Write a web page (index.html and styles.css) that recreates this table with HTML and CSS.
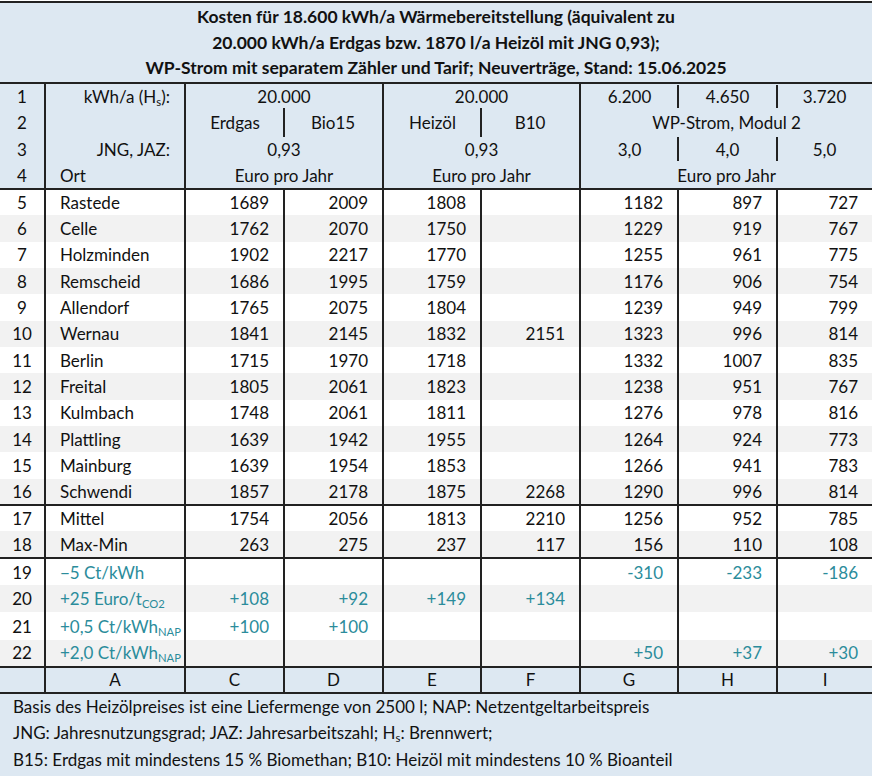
FILE: index.html
```html
<!DOCTYPE html>
<html lang="de">
<head>
<meta charset="utf-8">
<title>Kosten Wärmebereitstellung</title>
<link rel="stylesheet" href="styles.css">
</head>
<body>
<div class="sheet">
  <div class="title">
    <div>Kosten für 18.600 kWh/a Wärmebereitstellung (äquivalent zu</div>
    <div>20.000 kWh/a Erdgas bzw. 1870 l/a Heizöl mit JNG 0,93);</div>
    <div>WP-Strom mit separatem Zähler und Tarif; Neuverträge, Stand: 15.06.2025</div>
  </div>
  <table class="grid">
    <colgroup>
      <col class="c-n"><col class="c-a"><col class="c-c"><col class="c-d"><col class="c-e"><col class="c-f"><col class="c-g"><col class="c-h"><col class="c-i">
    </colgroup>
    <tbody class="head">
      <tr>
        <td class="n">1</td><td class="r">kWh/a (H<sub>s</sub>):</td>
        <td colspan="2" class="c">20.000</td>
        <td colspan="2" class="c sep">20.000</td>
        <td class="c sep tick">6.200</td><td class="c tick">4.650</td><td class="c">3.720</td>
      </tr>
      <tr>
        <td class="n">2</td><td></td>
        <td class="c tick2">Erdgas</td><td class="c">Bio15</td>
        <td class="c sep tick2">Heizöl</td><td class="c">B10</td>
        <td colspan="3" class="c sep">WP-Strom, Modul 2</td>
      </tr>
      <tr>
        <td class="n">3</td><td class="r">JNG, JAZ:</td>
        <td colspan="2" class="c">0,93</td>
        <td colspan="2" class="c sep">0,93</td>
        <td class="c sep tick">3,0</td><td class="c tick">4,0</td><td class="c">5,0</td>
      </tr>
      <tr>
        <td class="n">4</td><td class="l">Ort</td>
        <td colspan="2" class="c">Euro pro Jahr</td>
        <td colspan="2" class="c sep">Euro pro Jahr</td>
        <td colspan="3" class="c sep">Euro pro Jahr</td>
      </tr>
    </tbody>
    <tbody class="data">
      <tr><td class="n">5</td><td class="l">Rastede</td><td>1689</td><td>2009</td><td>1808</td><td></td><td>1182</td><td>897</td><td>727</td></tr>
      <tr><td class="n">6</td><td class="l">Celle</td><td>1762</td><td>2070</td><td>1750</td><td></td><td>1229</td><td>919</td><td>767</td></tr>
      <tr><td class="n">7</td><td class="l">Holzminden</td><td>1902</td><td>2217</td><td>1770</td><td></td><td>1255</td><td>961</td><td>775</td></tr>
      <tr><td class="n">8</td><td class="l">Remscheid</td><td>1686</td><td>1995</td><td>1759</td><td></td><td>1176</td><td>906</td><td>754</td></tr>
      <tr><td class="n">9</td><td class="l">Allendorf</td><td>1765</td><td>2075</td><td>1804</td><td></td><td>1239</td><td>949</td><td>799</td></tr>
      <tr><td class="n">10</td><td class="l">Wernau</td><td>1841</td><td>2145</td><td>1832</td><td>2151</td><td>1323</td><td>996</td><td>814</td></tr>
      <tr><td class="n">11</td><td class="l">Berlin</td><td>1715</td><td>1970</td><td>1718</td><td></td><td>1332</td><td>1007</td><td>835</td></tr>
      <tr><td class="n">12</td><td class="l">Freital</td><td>1805</td><td>2061</td><td>1823</td><td></td><td>1238</td><td>951</td><td>767</td></tr>
      <tr><td class="n">13</td><td class="l">Kulmbach</td><td>1748</td><td>2061</td><td>1811</td><td></td><td>1276</td><td>978</td><td>816</td></tr>
      <tr><td class="n">14</td><td class="l">Plattling</td><td>1639</td><td>1942</td><td>1955</td><td></td><td>1264</td><td>924</td><td>773</td></tr>
      <tr><td class="n">15</td><td class="l">Mainburg</td><td>1639</td><td>1954</td><td>1853</td><td></td><td>1266</td><td>941</td><td>783</td></tr>
      <tr><td class="n">16</td><td class="l">Schwendi</td><td>1857</td><td>2178</td><td>1875</td><td>2268</td><td>1290</td><td>996</td><td>814</td></tr>
    </tbody>
    <tbody class="data stats">
      <tr><td class="n">17</td><td class="l">Mittel</td><td>1754</td><td>2056</td><td>1813</td><td>2210</td><td>1256</td><td>952</td><td>785</td></tr>
      <tr><td class="n">18</td><td class="l">Max-Min</td><td>263</td><td>275</td><td>237</td><td>117</td><td>156</td><td>110</td><td>108</td></tr>
    </tbody>
    <tbody class="data extra">
      <tr><td class="n">19</td><td class="l t">−5 Ct/kWh</td><td></td><td></td><td></td><td></td><td class="t">-310</td><td class="t">-233</td><td class="t">-186</td></tr>
      <tr><td class="n">20</td><td class="l t">+25 Euro/t<sub>CO2</sub></td><td class="t">+108</td><td class="t">+92</td><td class="t">+149</td><td class="t">+134</td><td></td><td></td><td></td></tr>
      <tr><td class="n">21</td><td class="l t">+0,5 Ct/kWh<sub>NAP</sub></td><td class="t">+100</td><td class="t">+100</td><td></td><td></td><td></td><td></td><td></td></tr>
      <tr><td class="n">22</td><td class="l t">+2,0 Ct/kWh<sub>NAP</sub></td><td></td><td></td><td></td><td></td><td class="t">+50</td><td class="t">+37</td><td class="t">+30</td></tr>
    </tbody>
    <tbody class="labels">
      <tr><td></td><td>A</td><td>C</td><td>D</td><td>E</td><td>F</td><td>G</td><td>H</td><td>I</td></tr>
    </tbody>
  </table>
  <div class="notes">
    <div>Basis des Heizölpreises ist eine Liefermenge von 2500 l; NAP: Netzentgeltarbeitspreis</div>
    <div>JNG: Jahresnutzungsgrad; JAZ: Jahresarbeitszahl; H<sub>s</sub>: Brennwert;</div>
    <div>B15: Erdgas mit mindestens 15 % Biomethan; B10: Heizöl mit mindestens 10 % Bioanteil</div>
  </div>
</div>
</body>
</html>
```

FILE: styles.css
```css
html, body {
  margin: 0;
  padding: 0;
  background: #ffffff;
}

body {
  font-family: Lato, "Open Sans", "Liberation Sans", sans-serif;
  font-size: 17px;
  color: #111111;
}

.sheet {
  width: 872px;
  padding-top: 1px;
}

.title {
  background: #dde8f2;
  border-top: 2px solid #222;
  font-weight: 700;
  font-size: 17.5px;
  text-align: center;
  padding-top: 1px;
  height: 78px;
}

.title div {
  height: 25.5px;
  line-height: 25.5px;
  white-space: nowrap;
}

.grid {
  width: 872px;
  border-collapse: collapse;
  table-layout: fixed;
}

.c-n { width: 45px; }
.c-a { width: 140px; }
.c-c { width: 99px; }
.c-d { width: 99px; }
.c-e { width: 98px; }
.c-f { width: 99px; }
.c-g { width: 98px; }
.c-h { width: 99px; }
.c-i { width: 95px; }

.grid td {
  padding: 0 14px 0 14px;
  white-space: nowrap;
  text-align: right;
  vertical-align: middle;
  position: relative;
}

.grid td.n {
  text-align: center;
  padding: 0;
}

.grid td.l { text-align: left; }
.grid td.r { text-align: right; }
.grid td.c { text-align: center; padding: 0; }

sub {
  font-size: 0.66em;
  vertical-align: -0.25em;
  line-height: 0;
}

/* header block (rows 1-4) */
.head {
  background: #dde8f2;
  border-top: 2px solid #222;
}

.head tr { height: 26.5px; }

.head td.n,
.head td.n + td {
  border-right: 2px solid #222;
}

.head td.sep {
  border-left: 2px solid #222;
}

.head td.tick::after,
.head td.tick2::after {
  content: "";
  position: absolute;
  right: -1px;
  width: 2px;
  background: #222;
}

.head td.tick::after {
  top: 1px;
  bottom: 2px;
}

.head td.tick2::after {
  top: -2px;
  bottom: -1px;
}

/* data */
.data {
  border-top: 2px solid #222;
}

.data td {
  border-left: 2px solid #222;
}

.data td:first-child {
  border-left: none;
}

.data tr { height: 26.33px; }
.data tr:nth-child(even) td { background: #f2f2f2; }

.stats tr { height: 26.5px; }

.extra tr { height: 27.25px; }

.t { color: #2b8c9b; }

.labels {
  background: #dde8f2;
  border-top: 2px solid #222;
  border-bottom: 2px solid #222;
}

.labels tr { height: 26px; }

.labels td {
  text-align: center !important;
  padding: 0 !important;
  border-left: 2px solid #222;
}

.labels td:first-child { border-left: none; }

.notes {
  background: #dde8f2;
  padding: 0 13px;
  height: 82px;
  border-bottom: 3px solid #fff;
  box-shadow: 0 2px 0 #222;
}

.notes div {
  height: 26.3px;
  line-height: 25px;
  white-space: nowrap;
}
```
